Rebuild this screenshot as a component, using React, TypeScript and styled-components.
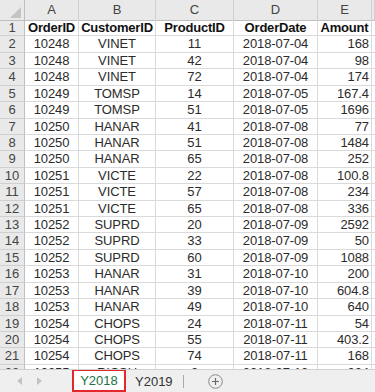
import styled, { createGlobalStyle } from 'styled-components';

const GlobalStyle = createGlobalStyle`
	html, body {
		margin: 0;
		padding: 0;
		background: #ffffff;
	}
	* {
		box-sizing: border-box;
	}
`;

const COLUMNS = '25px 54px 77px 78px 84px 54px 1fr';
const ROW_HEIGHT = 16.43;

type Align = 'left' | 'center' | 'right';

const rows: [string, string, string, string, string][] = [
	['10248', 'VINET', '11', '2018-07-04', '168'],
	['10248', 'VINET', '42', '2018-07-04', '98'],
	['10248', 'VINET', '72', '2018-07-04', '174'],
	['10249', 'TOMSP', '14', '2018-07-05', '167.4'],
	['10249', 'TOMSP', '51', '2018-07-05', '1696'],
	['10250', 'HANAR', '41', '2018-07-08', '77'],
	['10250', 'HANAR', '51', '2018-07-08', '1484'],
	['10250', 'HANAR', '65', '2018-07-08', '252'],
	['10251', 'VICTE', '22', '2018-07-08', '100.8'],
	['10251', 'VICTE', '57', '2018-07-08', '234'],
	['10251', 'VICTE', '65', '2018-07-08', '336'],
	['10252', 'SUPRD', '20', '2018-07-09', '2592'],
	['10252', 'SUPRD', '33', '2018-07-09', '50'],
	['10252', 'SUPRD', '60', '2018-07-09', '1088'],
	['10253', 'HANAR', '31', '2018-07-10', '200'],
	['10253', 'HANAR', '39', '2018-07-10', '604.8'],
	['10253', 'HANAR', '49', '2018-07-10', '640'],
	['10254', 'CHOPS', '24', '2018-07-11', '54'],
	['10254', 'CHOPS', '55', '2018-07-11', '403.2'],
	['10254', 'CHOPS', '74', '2018-07-11', '168'],
	['10255', 'RICSU', '2', '2018-07-12', '304'],
];

const aligns: Align[] = ['center', 'center', 'center', 'center', 'right'];

const Page = styled.div`
	width: 375px;
	height: 392px;
	display: flex;
	flex-direction: column;
	overflow: hidden;
	font-family: 'Liberation Sans', Arial, sans-serif;
	font-size: 13px;
	color: #262626;
`;

const Sheet = styled.div`
	flex: 1;
	overflow: hidden;
	border-bottom: 1px solid #d0d0d0;
`;

const Row = styled.div<{ $height: number }>`
	display: grid;
	grid-template-columns: ${COLUMNS};
	height: ${({ $height }) => $height}px;
`;

const Corner = styled.div`
	position: relative;
	background: #e9e9e9;
	border-right: 1px solid #bfbfbf;
	border-bottom: 1px solid #bfbfbf;
	&::after {
		content: '';
		position: absolute;
		right: 3px;
		bottom: 2px;
		width: 0;
		height: 0;
		border-left: 11px solid transparent;
		border-bottom: 11px solid #c4c4c4;
	}
`;

const ColHead = styled.div`
	background: #e9e9e9;
	border-right: 1px solid #d0d0d0;
	border-bottom: 1px solid #bfbfbf;
	color: #444444;
	text-align: center;
	line-height: 20px;
	font-size: 13px;
`;

const RowHead = styled.div`
	background: #e9e9e9;
	border-right: 1px solid #bfbfbf;
	border-bottom: 1px solid #d0d0d0;
	color: #444444;
	text-align: center;
	line-height: 15px;
	font-size: 13px;
`;

const Cell = styled.div<{ $align: Align; $bold?: boolean }>`
	border-right: 1px solid #dadada;
	border-bottom: 1px solid #dadada;
	text-align: ${({ $align }) => $align};
	padding: 0 2px 0 2px;
	line-height: 15px;
	white-space: nowrap;
	overflow: hidden;
	font-weight: ${({ $bold }) => ($bold ? 700 : 400)};
	color: ${({ $bold }) => ($bold ? '#111111' : '#2b2b2b')};
	letter-spacing: ${({ $bold }) => ($bold ? '-0.2px' : '-0.1px')};
`;

const TabBar = styled.div`
	height: 22px;
	flex-shrink: 0;
	background: #efefef;
	display: flex;
	align-items: center;
	padding-left: 17px;
`;

const NavArrow = styled.span<{ $dir: 'left' | 'right' }>`
	width: 0;
	height: 0;
	border-top: 4px solid transparent;
	border-bottom: 4px solid transparent;
	${({ $dir }) =>
		$dir === 'left'
			? 'border-right: 5px solid #c2c2c2;'
			: 'border-left: 5px solid #c2c2c2;'}
	margin-right: 15px;
`;

const Tab = styled.div<{ $active?: boolean }>`
	height: 100%;
	display: flex;
	align-items: center;
	justify-content: center;
	font-size: 13px;
	${({ $active }) =>
		$active
			? `
		width: 54px;
		margin-left: 15px;
		background: #ffffff;
		color: #217346;
		border: 2px solid #e3282c;
		border-top-width: 1px;
	`
			: `
		padding: 0 9px;
		color: #333333;
	`}
`;

const Divider = styled.span`
	width: 1px;
	height: 13px;
	background: #a8a8a8;
	margin-left: 1px;
`;

const AddButton = styled.div`
	width: 15px;
	height: 15px;
	margin-left: 24px;
	display: flex;
	align-items: center;
	justify-content: center;
`;

const App = () => {
	return (
		<Page>
			<GlobalStyle />
			<Sheet>
				<Row $height={20}>
					<Corner />
					{['A', 'B', 'C', 'D', 'E', ''].map((c) => (
						<ColHead key={c}>{c}</ColHead>
					))}
				</Row>
				<Row $height={ROW_HEIGHT}>
					<RowHead>1</RowHead>
					{['OrderID', 'CustomerID', 'ProductID', 'OrderDate', 'Amount'].map((h) => (
						<Cell key={h} $align='center' $bold>
							{h}
						</Cell>
					))}
					<Cell $align='left' />
				</Row>
				{rows.map((r, i) => (
					<Row key={i} $height={ROW_HEIGHT}>
						<RowHead>{i + 2}</RowHead>
						{r.map((v, j) => (
							<Cell key={j} $align={aligns[j]}>
								{v}
							</Cell>
						))}
						<Cell $align='left' />
					</Row>
				))}
			</Sheet>
			<TabBar>
				<NavArrow $dir='left' />
				<NavArrow $dir='right' />
				<Tab $active>Y2018</Tab>
				<Tab>Y2019</Tab>
				<Divider />
				<AddButton>
					<svg width='15' height='15' viewBox='0 0 15 15'>
						<circle cx='7.5' cy='7.5' r='6.8' fill='none' stroke='#8a8a8a' strokeWidth='1' />
						<path d='M7.5 4v7M4 7.5h7' stroke='#6a6a6a' strokeWidth='1.2' />
					</svg>
				</AddButton>
			</TabBar>
		</Page>
	);
};

export default App;
